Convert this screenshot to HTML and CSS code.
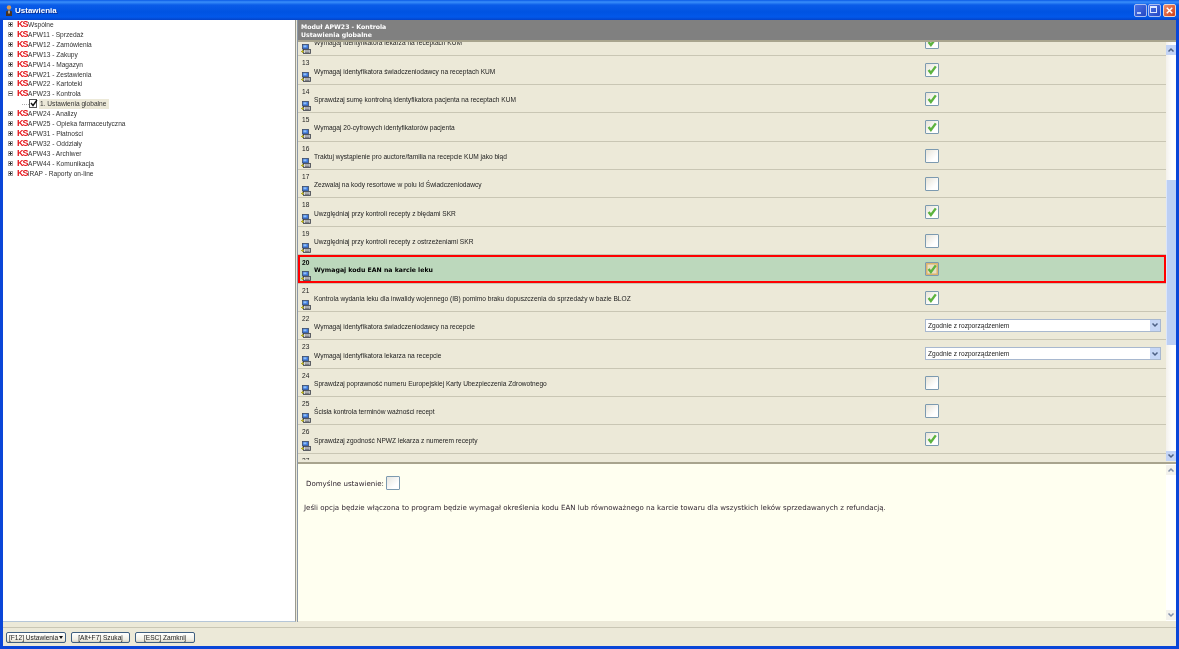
FILE: index.html
```html
<!DOCTYPE html>
<html lang="pl">
<head>
<meta charset="utf-8">
<title>Ustawienia</title>
<link rel="stylesheet" href="styles.css">
</head>
<body>
<svg class="defs" width="0" height="0" aria-hidden="true">
  <symbol id="pc" viewBox="0 0 10 10">
    <rect x="1.500" y="0.500" width="6" height="4.500" fill="#3f78dc" stroke="#3a4a66" stroke-width="0.8"/>
    <rect x="2.500" y="1.300" width="3" height="2" fill="#8fc0f5"/>
    <rect x="2.500" y="5.500" width="7" height="4" fill="#d4d6d8" stroke="#3a3d46" stroke-width="0.8"/>
    <path d="M4 7h4.500M4 8.500h4.500" stroke="#44474f" stroke-width="0.6"/>
    <path d="M0 7.500h3M1.500 6v3" stroke="#b5ac2c" stroke-width="1"/>
  </symbol>
  <symbol id="tick" viewBox="0 0 12 12">
    <path d="M2.600 6 4.900 9 9.800 2.400" fill="none" stroke="#5cb33f" stroke-width="2.400"/>
  </symbol>
  <symbol id="chev" viewBox="0 0 8 8">
    <path d="M1.500 2.500 4 5 6.500 2.500" fill="none" stroke="#4d6185" stroke-width="1.500"/>
  </symbol>
  <symbol id="chevup" viewBox="0 0 8 8">
    <path d="M1.500 5.500 4 3 6.500 5.500" fill="none" stroke="#4d6185" stroke-width="1.500"/>
  </symbol>
</svg>
<div class="window">
  <header class="titlebar">
    <svg class="app-icon" viewBox="0 0 8 11"><circle cx="4" cy="2.500" r="2.200" fill="#d79a55"/><path d="M1 11V6.500L4 5l3 1.500V11z" fill="#4a3320"/><path d="M3.400 5.500h1.200v3H3.400z" fill="#f0e2c8"/></svg>
    <span class="title">Ustawienia</span>
    <div class="controls">
      <span class="ctl"><i class="min"></i></span>
      <span class="ctl"><i class="max"></i></span>
      <span class="ctl close"><svg viewBox="0 0 12 12"><path d="M3 3l6 6M9 3l-6 6" stroke="#fff" stroke-width="1.600"/></svg></span>
    </div>
  </header>
  <main class="main">
    <nav class="tree">
      <div class="node"><span class="exp plus"></span><span class="ks">KS</span>Wspólne</div>
      <div class="node"><span class="exp plus"></span><span class="ks">KS</span>APW11 - Sprzedaż</div>
      <div class="node"><span class="exp plus"></span><span class="ks">KS</span>APW12 - Zamówienia</div>
      <div class="node"><span class="exp plus"></span><span class="ks">KS</span>APW13 - Zakupy</div>
      <div class="node"><span class="exp plus"></span><span class="ks">KS</span>APW14 - Magazyn</div>
      <div class="node"><span class="exp plus"></span><span class="ks">KS</span>APW21 - Zestawienia</div>
      <div class="node"><span class="exp plus"></span><span class="ks">KS</span>APW22 - Kartoteki</div>
      <div class="node"><span class="exp"></span><span class="ks">KS</span>APW23 - Kontrola</div>
      <div class="node child"><span class="branch"></span><svg class="leaf" viewBox="0 0 9 9"><rect x="0.500" y="0.500" width="7" height="8" fill="#fff" stroke="#555"/><path d="M2 4l2 2.500L8 1" fill="none" stroke="#111" stroke-width="1.400"/></svg><span class="sel">1. Ustawienia globalne</span></div>
      <div class="node"><span class="exp plus"></span><span class="ks">KS</span>APW24 - Analizy</div>
      <div class="node"><span class="exp plus"></span><span class="ks">KS</span>APW25 - Opieka farmaceutyczna</div>
      <div class="node"><span class="exp plus"></span><span class="ks">KS</span>APW31 - Płatności</div>
      <div class="node"><span class="exp plus"></span><span class="ks">KS</span>APW32 - Oddziały</div>
      <div class="node"><span class="exp plus"></span><span class="ks">KS</span>APW43 - Archiwer</div>
      <div class="node"><span class="exp plus"></span><span class="ks">KS</span>APW44 - Komunikacja</div>
      <div class="node"><span class="exp plus"></span><span class="ks">KS</span>iRAP - Raporty on-line</div>
    </nav>
    <section class="content">
      <div class="head">
        <div>Moduł APW23 - Kontrola</div>
        <div>Ustawienia globalne</div>
      </div>
      <div class="upper">
        <div class="rows">
          <div class="rows-inner">
            <div class="row"><div class="lab"><div class="num">12</div><div class="line"><svg class="pc"><use href="#pc"/></svg><span>Wymagaj identyfikatora lekarza na receptach KUM</span></div></div><span class="cb"><svg><use href="#tick"/></svg></span></div>
            <div class="row"><div class="lab"><div class="num">13</div><div class="line"><svg class="pc"><use href="#pc"/></svg><span>Wymagaj identyfikatora świadczeniodawcy na receptach KUM</span></div></div><span class="cb"><svg><use href="#tick"/></svg></span></div>
            <div class="row"><div class="lab"><div class="num">14</div><div class="line"><svg class="pc"><use href="#pc"/></svg><span>Sprawdzaj sumę kontrolną identyfikatora pacjenta na receptach KUM</span></div></div><span class="cb"><svg><use href="#tick"/></svg></span></div>
            <div class="row"><div class="lab"><div class="num">15</div><div class="line"><svg class="pc"><use href="#pc"/></svg><span>Wymagaj 20-cyfrowych identyfikatorów pacjenta</span></div></div><span class="cb"><svg><use href="#tick"/></svg></span></div>
            <div class="row"><div class="lab"><div class="num">16</div><div class="line"><svg class="pc"><use href="#pc"/></svg><span>Traktuj wystąpienie pro auctore/familia na recepcie KUM jako błąd</span></div></div><span class="cb"></span></div>
            <div class="row"><div class="lab"><div class="num">17</div><div class="line"><svg class="pc"><use href="#pc"/></svg><span>Zezwalaj na kody resortowe w polu Id Świadczeniodawcy</span></div></div><span class="cb"></span></div>
            <div class="row"><div class="lab"><div class="num">18</div><div class="line"><svg class="pc"><use href="#pc"/></svg><span>Uwzględniaj przy kontroli recepty z błędami SKR</span></div></div><span class="cb"><svg><use href="#tick"/></svg></span></div>
            <div class="row"><div class="lab"><div class="num">19</div><div class="line"><svg class="pc"><use href="#pc"/></svg><span>Uwzględniaj przy kontroli recepty z ostrzeżeniami SKR</span></div></div><span class="cb"></span></div>
            <div class="row active"><div class="lab"><div class="num">20</div><div class="line"><svg class="pc"><use href="#pc"/></svg><span>Wymagaj kodu EAN na karcie leku</span></div></div><span class="cb hot"><svg><use href="#tick"/></svg></span></div>
            <div class="row"><div class="lab"><div class="num">21</div><div class="line"><svg class="pc"><use href="#pc"/></svg><span>Kontrola wydania leku dla inwalidy wojennego (IB) pomimo braku dopuszczenia do sprzedaży w bazie BLOZ</span></div></div><span class="cb"><svg><use href="#tick"/></svg></span></div>
            <div class="row"><div class="lab"><div class="num">22</div><div class="line"><svg class="pc"><use href="#pc"/></svg><span>Wymagaj identyfikatora świadczeniodawcy na recepcie</span></div></div><div class="select"><span>Zgodnie z rozporządzeniem</span><b class="drop"><svg><use href="#chev"/></svg></b></div></div>
            <div class="row"><div class="lab"><div class="num">23</div><div class="line"><svg class="pc"><use href="#pc"/></svg><span>Wymagaj identyfikatora lekarza na recepcie</span></div></div><div class="select"><span>Zgodnie z rozporządzeniem</span><b class="drop"><svg><use href="#chev"/></svg></b></div></div>
            <div class="row"><div class="lab"><div class="num">24</div><div class="line"><svg class="pc"><use href="#pc"/></svg><span>Sprawdzaj poprawność numeru Europejskiej Karty Ubezpieczenia Zdrowotnego</span></div></div><span class="cb"></span></div>
            <div class="row"><div class="lab"><div class="num">25</div><div class="line"><svg class="pc"><use href="#pc"/></svg><span>Ścisła kontrola terminów ważności recept</span></div></div><span class="cb"></span></div>
            <div class="row"><div class="lab"><div class="num">26</div><div class="line"><svg class="pc"><use href="#pc"/></svg><span>Sprawdzaj zgodność NPWZ lekarza z numerem recepty</span></div></div><span class="cb"><svg><use href="#tick"/></svg></span></div>
            <div class="row"><div class="lab"><div class="num">27</div></div></div>
          </div>
        </div>
        <div class="sbar">
          <span class="sbtn"><svg><use href="#chevup"/></svg></span>
          <div class="strack"><div class="sthumb"></div></div>
          <span class="sbtn"><svg><use href="#chev"/></svg></span>
        </div>
      </div>
      <div class="divider"></div>
      <div class="lower">
        <div class="desc">
          <div class="default"><span>Domyślne ustawienie:</span><span class="cb plain"></span></div>
          <p>Jeśli opcja będzie włączona to program będzie wymagał określenia kodu EAN lub równoważnego na karcie towaru dla wszystkich leków sprzedawanych z refundacją.</p>
        </div>
        <div class="sbar off">
          <span class="sbtn"><svg><use href="#chevup"/></svg></span>
          <div class="strack"></div>
          <span class="sbtn"><svg><use href="#chev"/></svg></span>
        </div>
      </div>
    </section>
  </main>
  <div class="strip"></div>
  <footer class="footer">
    <span class="btn b1">[F12] Ustawienia<i class="caret"></i></span>
    <span class="btn b2">[Alt+F7] Szukaj</span>
    <span class="btn b3">[ESC] Zamknij</span>
  </footer>
</div>
</body>
</html>
```
FILE: styles.css
```css
html, body { margin: 0; padding: 0; height: 100%; overflow: hidden; }
body { font-family: "Liberation Sans", sans-serif; font-size: 6.6px; color: #222; background: #0a3fd0; }
.defs { display: block; height: 0; }

.window {
  height: 649px; box-sizing: border-box; display: flex; flex-direction: column;
  padding: 0 3px 3px; background: #0a46d8; filter: blur(0.3px);
}

.titlebar {
  height: 20px; flex: none; margin: 0 -3px; padding: 0 3px 0 5px; display: flex; align-items: center;
  background: linear-gradient(#0a5ae6 0, #3a8ffa 2px, #0a5ce8 5px, #0053e2 12px, #0258ea 17px, #0443c8 20px);
}
.app-icon { width: 8px; height: 11px; margin-right: 2px; }
.title { font: bold 8px "Liberation Sans", sans-serif; color: #fff; text-shadow: 1px 1px 0 #0a2f90; }
.controls { margin-left: auto; display: flex; gap: 1px; }
.ctl {
  width: 13px; height: 13px; box-sizing: border-box; border: 1px solid #a9bdf0; border-radius: 2px;
  background: linear-gradient(135deg, #4a72e6, #2448c4); display: flex;
}
.ctl.close { background: linear-gradient(135deg, #ef8e6c, #cf3d17); margin-left: 1px; border-color: #e8d8d0; }
.ctl svg { width: 11px; height: 11px; }
.min { width: 4px; height: 2px; background: #b9ccfa; margin: 7px 0 0 2px; }
.max { width: 7px; height: 7px; border: 1px solid #dfe8ff; border-top-width: 2px; margin: 1px 0 0 1px; box-sizing: border-box; }

.main { flex: none; height: 602px; display: flex; background: #ece9d8; }
.tree {
  width: 293px; flex: none; background: #fff; box-sizing: border-box;
  border-right: 1px solid #9a9a90; border-bottom: 1px solid #b5c6d8; margin-right: 1px;
  font-size: 6.6px;
}
.node { height: 9.930px; display: flex; align-items: center; color: #333; padding-left: 5px; position: relative; top: -0.500px; }
.exp {
  width: 5px; height: 5px; box-sizing: border-box; border: 1px solid #a5a5a5; margin-right: 4px; flex: none;
  background: linear-gradient(#333, #333) center / 3px 1px no-repeat, #fff;
}
.exp.plus { background: linear-gradient(#333, #333) center / 3px 1px no-repeat, linear-gradient(#333, #333) center / 1px 3px no-repeat, #fff; }
.ks { font: bold 9px/9px "Liberation Sans", sans-serif; color: #e5151b; letter-spacing: -1px; width: 11px; flex: none; }
.child { padding-left: 19px; }
.branch { width: 7px; border-bottom: 1px dotted #aaa; height: 1px; flex: none; }
.leaf { width: 9px; height: 9px; margin-right: 1px; flex: none; }
.sel { background: #ece9d8; padding: 0 1px; height: 10px; line-height: 10px; width: 68px; white-space: nowrap; }

.content { flex: 1; min-width: 0; display: flex; flex-direction: column; background: #ece9d8; border-left: 1px solid #8a97a8; box-sizing: border-box; }
.head {
  height: 20px; flex: none; background: #808080; color: #fff; font: bold 6.2px/8.5px "DejaVu Sans", sans-serif;
  padding: 2.500px 0 0 3px; box-sizing: border-box;
}
.upper { height: 422px; flex: none; display: flex; border-top: 2px solid #a8a48e; box-sizing: border-box; }
.rows { flex: 1; min-width: 0; overflow: hidden; margin-bottom: 2px; }
.rows-inner { margin-top: -14px; }
.row {
  height: 28.400px; box-sizing: border-box; border-bottom: 1px solid #c9c6b4; display: flex; padding-right: 5px;
}
.lab { width: 627px; flex: none; padding: 3px 0 0 4px; box-sizing: border-box; }
.num { height: 9px; line-height: 8px; }
.line { display: flex; gap: 3px; margin-left: -1px; line-height: 8px; }
.pc { width: 10px; height: 10px; flex: none; margin-top: 4px; }
.line span { white-space: nowrap; margin-top: -0.700px; }
.active { background: #bcd8bc; box-shadow: inset 0 0 0 2px #f00; font-weight: bold; color: #000; }
.active .lab { padding-top: 4px; }
.active .pc { margin-top: 3px; }
.active .line span { margin-top: -2.500px; font: bold 6.2px/8px "DejaVu Sans", sans-serif; }

.cb {
  width: 14px; height: 14px; box-sizing: border-box; margin-top: 7px; flex: none; display: block;
  border: 1px solid #7c9ab0; background: linear-gradient(135deg, #e6e3d8, #fff 70%); border-radius: 1px;
}
.cb svg { display: block; width: 12px; height: 12px; }
.cb.hot { background: #e9dfc4; box-shadow: inset 0 0 0 1.500px #dcb36c; }
.cb.plain { margin: 0 0 0 2px; background: linear-gradient(135deg, #e6e6e0, #fff 70%); }

.select {
  width: 236px; height: 13px; margin-top: 7px; box-sizing: border-box; border: 1px solid #a8b8cf; background: #fff;
  display: flex; justify-content: space-between; align-items: center; padding-left: 2px; flex: none;
}
.drop { width: 10px; height: 11px; background: #c5d6f6; display: flex; align-items: center; justify-content: center; }
.drop svg { width: 8px; height: 8px; }

.sbar { width: 10px; flex: none; display: flex; flex-direction: column; background: linear-gradient(90deg, #f3f1ec, #fff 60%); }
.sbtn { height: 10px; flex: none; background: #c3d4f6; display: flex; align-items: center; justify-content: center; margin: 1px 0; }
.sbar:not(.off) .sbtn:first-child { margin-top: 3px; }
.sbtn svg { width: 8px; height: 8px; }
.strack { flex: 1; padding-top: 124px; box-sizing: border-box; }
.sthumb { height: 165px; background: #bccff4; border-left: 1px solid #dce6fb; box-sizing: border-box; }
.off .sbtn { background: #eeede5; opacity: .7; }
.off { background: #fff; }

.divider { height: 3px; flex: none; background: #ece9d8; border-bottom: 2px solid #a8a48e; box-sizing: border-box; margin-top: -1px; }
.lower { height: 157px; flex: none; display: flex; background: #fffff0; }
.desc { flex: 1; min-width: 0; font: 7.050px "DejaVu Sans", sans-serif; color: #2a1f2a; padding: 12px 0 0 6px; }
.default { display: flex; align-items: center; padding-left: 2px; }
.desc p { margin: 14px 0 0; line-height: 8px; white-space: nowrap; }

.strip { height: 5px; flex: none; background: #ece9d8; }
.footer {
  flex: 1; border-top: 1px solid #c9c6b4; background: #ece9d8; display: flex; gap: 5px;
  align-items: flex-start; padding: 4px 0 0 3px; box-sizing: border-box;
}
.btn {
  height: 11px; box-sizing: border-box; border: 1px solid #3f5f80; border-radius: 2px; line-height: 9px;
  background: linear-gradient(#fff, #f2f0e6 70%, #d8d4c4); display: flex; align-items: center; justify-content: center; white-space: nowrap;
}
.b1 { width: 60px; padding: 0 2px; justify-content: space-between; }
.b2 { width: 59px; }
.b3 { width: 60px; }
.caret { width: 0; height: 0; border: 2px solid transparent; border-top: 3px solid #111; border-bottom: 0; }
```
